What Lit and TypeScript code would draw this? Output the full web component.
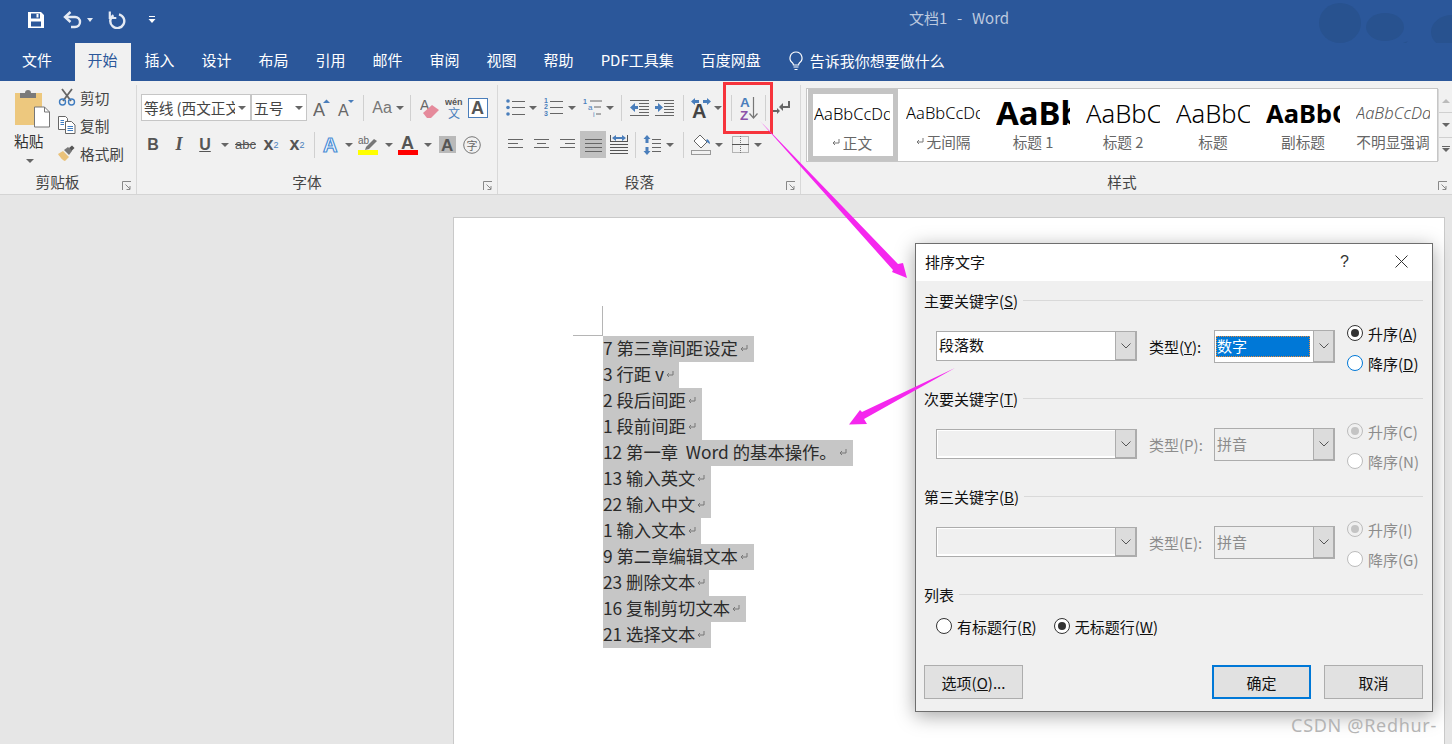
import { LitElement, html, css, svg, type TemplateResult } from "lit";
import { customElement } from "lit/decorators.js";

const GRAY = "#666";
const BLUE = "#4a7ebb";

const ico = (w: number, h: number, body: unknown) =>
  html`<svg width=${w} height=${h} viewBox="0 0 ${w} ${h}">${body}</svg>`;

const lines = (x1: number, x2: number, ys: number[], color = GRAY) =>
  ys.map((y) => svg`<rect x=${x1} y=${y} width=${x2 - x1} height="1" fill=${color} />`);

// -------------------------------------------------------------------------
// Icons
// -------------------------------------------------------------------------

const icons = {
  save: ico(18, 18, svg`<path fill-rule="evenodd" fill="#fff" d="M1 1h13l3 3v13H1zM4 2.500v5h9v-5zM4 10.500v5h10v-5z"/><rect x="9.500" y="3" width="2" height="3.500" fill="#fff"/>`),
  undo: ico(20, 18, svg`<path d="M3 6h9a5 5 0 0 1 0 10H8" fill="none" stroke="#e4eaf4" stroke-width="2.400"/><path d="M7.500 1 2 6l5.500 5" fill="none" stroke="#e4eaf4" stroke-width="2.400"/>`),
  redo: ico(18, 18, svg`<path d="M5.500 4.200A7 7 0 1 0 11 3.300" fill="none" stroke="#e4eaf4" stroke-width="2.400"/><path d="M1.800 .5v6.500h6.500" fill="none" stroke="#e4eaf4" stroke-width="2.200"/>`),
  qat: ico(8, 8, svg`<rect x="1" y="0" width="6" height="1" fill="#fff"/><path d="M0.500 3h7L4 7z" fill="#fff"/>`),
  bulb: ico(16, 20, svg`<path d="M8 1a6 6 0 0 0-3.600 10.800c.8.7 1 1.400 1 2.200h5.200c0-.8.2-1.500 1-2.200A6 6 0 0 0 8 1z" fill="none" stroke="#fff" stroke-width="1.200"/><path d="M5.500 16h5M6.500 18.500h3" stroke="#fff" stroke-width="1.200"/>`),
  paste: ico(36, 40, svg`<rect x="0" y="5" width="27" height="32" fill="#edc87e"/><path d="M5 5h5a3 3 0 0 1 6 0h5v5H5z" fill="#7a7a7a"/><path d="M19.500 19h10l5 5v15h-15z" fill="#fff" stroke="#777"/><path d="M29.500 19v5h5" fill="none" stroke="#777"/>`),
  cut: ico(18, 18, svg`<path d="M4 1l9 12M14 1L5 13" stroke="#666" stroke-width="1.800" fill="none"/><circle cx="4.500" cy="14" r="3" fill="none" stroke="#3f7cc0" stroke-width="1.400"/><circle cx="13.500" cy="14" r="3" fill="none" stroke="#3f7cc0" stroke-width="1.400"/>`),
  copy: ico(18, 18, svg`<path d="M.5.500h7l2 2v11H.5z" fill="#fff" stroke="#666"/><path d="M7.500 5.500h6l3.500 3.500v8.500H7.500z" fill="#fff" stroke="#666"/>${lines(9.5, 15, [10, 12, 14], "#3f7cc0")}${lines(2.5, 6, [4, 6, 8], "#3f7cc0")}`),
  painter: ico(18, 16, svg`<path d="M0 9l5-3 6 6-4 4C5 16 2 12 0 9z" fill="#eac27a"/><path d="M6 5l4-3 4 4-3 4z" fill="#777"/><path d="M11 3l3-2.500 2.500 2.500-3 3z" fill="#555"/>`),
  launcher: ico(9, 10, svg`<path d="M.5 9V.5H9M3.500 3.500 8 8M8 5v3.500H4.500" fill="none" stroke="#888"/>`),
  grow: ico(20, 18, svg`<text x="0" y="17" font-size="18" font-family="Liberation Sans" fill="#666">A</text><path d="M10 4l3.500-3.500L17 4z" fill="${BLUE}"/>`),
  shrink: ico(20, 18, svg`<text x="1" y="17" font-size="16" font-family="Liberation Sans" fill="#666">A</text><path d="M11 1h6l-3 3z" fill="${BLUE}"/>`),
  eraser: ico(20, 20, svg`<text x="0" y="12" font-size="14" font-family="Liberation Sans" fill="#666">A</text><path d="M3 15l9-8 7 5-8 8H7z" fill="#e58a9b"/>`),
  wen: ico(18, 22, svg`<text x="0" y="8" font-size="9" font-weight="700" font-family="Liberation Sans" fill="#555">wén</text><text x="3" y="21" font-size="12" font-family="Noto Sans CJK SC" fill="${BLUE}">文</text>`),
  boxA: ico(20, 20, svg`<rect x=".5" y=".5" width="19" height="19" fill="#fff" stroke="${BLUE}"/><text x="3" y="16" font-size="18" font-weight="700" font-family="Liberation Sans" fill="#555">A</text>`),
  effectA: ico(20, 20, svg`<text x="1" y="17" font-size="20" font-weight="700" font-family="Liberation Sans" fill="#fff" stroke="#4d8fd6" stroke-width="1.200">A</text>`),
  highlight: ico(20, 20, svg`<text x="0" y="9" font-size="10" font-family="Liberation Sans" fill="#666">ab</text><path d="M8 12l8-8 3 2-8 8-4 1z" fill="#777"/><rect x="0" y="15" width="20" height="5" fill="#ff0"/>`),
  colorA: ico(20, 20, svg`<text x="3" y="14" font-size="18" font-weight="700" font-family="Liberation Sans" fill="#555">A</text><rect x="0" y="15" width="20" height="5" fill="#f00"/>`),
  shadeA: ico(17, 17, svg`<rect width="17" height="17" fill="#b9b9b9"/><text x="2" y="15" font-size="17" font-weight="700" font-family="Liberation Sans" fill="#555">A</text>`),
  zi: ico(18, 18, svg`<circle cx="9" cy="9" r="8.300" fill="none" stroke="#777"/><text x="3.500" y="13.500" font-size="11" font-family="Noto Sans CJK SC" fill="#666">字</text>`),
  bullets: ico(19, 17, svg`${lines(6, 19, [2, 8, 15])}<circle cx="2" cy="2" r="1.800" fill="${BLUE}"/><circle cx="2" cy="8.500" r="1.800" fill="${BLUE}"/><circle cx="2" cy="15" r="1.800" fill="${BLUE}"/>`),
  numbers: ico(19, 19, svg`${lines(6, 19, [3, 9, 15])}${[5, 11, 18].map((y, i) => svg`<text x="0" y=${y} font-size="7" font-weight="700" font-family="Liberation Sans" fill="${BLUE}">${i + 1}</text>`)}`),
  multi: ico(20, 19, svg`<path d="M7 3h12M11 9h7M13 16h5" stroke="#666"/><text x="0" y="6" font-size="7" font-weight="700" font-family="Liberation Sans" fill="${BLUE}">1</text><text x="5" y="12" font-size="8" font-family="Liberation Sans" fill="${BLUE}">a</text><text x="10" y="19" font-size="7" font-family="Liberation Sans" fill="${BLUE}">i</text>`),
  outdent: ico(19, 16, svg`${lines(0, 19, [0, 15])}${lines(9, 19, [3, 6, 9, 12])}<path d="M0 7.500 5 3v3h3v3H5v3z" fill="${BLUE}"/>`),
  indent: ico(19, 16, svg`${lines(0, 19, [0, 15])}${lines(9, 19, [3, 6, 9, 12])}<path d="M8 7.500 3 3v3H0v3h3v3z" fill="${BLUE}"/>`),
  pinyinA: ico(20, 20, svg`<path d="M0 3.500 4 0v2h4v3H4v2zM20 3.500 16 0v2h-4v3h4v2z" fill="${BLUE}"/><text x="1" y="20" font-size="20" font-weight="700" font-family="Liberation Sans" fill="#444">A</text>`),
  sort: ico(18, 24, svg`<text x="0" y="11" font-size="13.500" font-weight="700" font-family="Liberation Sans" fill="${BLUE}">A</text><text x="0" y="24" font-size="13.500" font-weight="700" font-family="Liberation Sans" fill="#8b52a8">Z</text><path d="M13.500 1v21M9.500 17.500l4 4.500 4-4.500" fill="none" stroke="#777" stroke-width="1.200"/>`),
  enter: ico(18, 16, svg`<path d="M16 1v6H8" fill="none" stroke="#666" stroke-width="2"/><path d="M10 3 6 7l4 4z" fill="#666"/><path d="M0 11h5" stroke="#666" stroke-width="2"/><path d="M4 8l3 3-3 3z" fill="#666"/>`),
  left: ico(15, 13, lines(0, 15, [1, 9]).concat(lines(0, 10, [5, 13]))),
  center: ico(15, 13, lines(0, 15, [1, 9]).concat(lines(3, 12, [5, 13]))),
  right: ico(15, 13, lines(0, 15, [1, 9]).concat(lines(5, 15, [5, 13]))),
  justify: ico(17, 14, lines(0, 17, [1, 5, 9, 13])),
  distribute: ico(18, 19, svg`${lines(0, 18, [6, 9, 12, 15, 18], "#555")}<rect x="0" y="0" width="1" height="6" fill="#555"/><rect x="17" y="0" width="1" height="6" fill="#555"/><path d="M2 3l4-3v2h6V0l4 3-4 3V4H6v2z" fill="${BLUE}"/>`),
  spacing: ico(18, 20, svg`<path d="M3 0l3.500 4H4.500v4h-3V4H-.5zM3 20l3.500-4H4.500v-4h-3v4H-.5z" fill="${BLUE}" transform="translate(1 0)"/>${lines(9, 18, [4, 8, 12, 16])}`),
  shading: ico(20, 21, svg`<path d="M9 1l7 7-6 6-7-7z" fill="#fff" stroke="#666"/><path d="M16 5c2 1 3 3 3 5-2-1-3-2-4-3z" fill="${BLUE}"/><rect x=".5" y="16.500" width="19" height="4" fill="#f1f1f1" stroke="#999"/>`),
  borders: ico(17, 17, svg`<rect x=".5" y=".5" width="16" height="16" fill="none" stroke="#777" stroke-dasharray="1 1"/><path d="M8.500 0v17" stroke="#777" stroke-dasharray="1 1"/><path d="M0 8.500h17" stroke="#555"/>`),
  ret: ico(8, 8, svg`<path d="M7 1v4H2" fill="none" stroke="#777"/><path d="M3 3 1 5l2 2" fill="none" stroke="#777"/>`),
  chevron: ico(10, 6, svg`<path d="M.5.500 5 5 9.500.500" fill="none" stroke="#555"/>`),
};

const docLines: [string, number][] = [
  ["7 第三章间距设定", 151],
  ["3 行距 v", 76],
  ["2 段后间距", 99],
  ["1 段前间距", 99],
  ["12 第一章  Word 的基本操作。", 250],
  ["13 输入英文", 108],
  ["22 输入中文", 108],
  ["1 输入文本", 98],
  ["9 第二章编辑文本", 151],
  ["23 删除文本", 106],
  ["16 复制剪切文本", 143],
  ["21 选择文本", 108],
];

const tabs = ["文件", "开始", "插入", "设计", "布局", "引用", "邮件", "审阅", "视图", "帮助", "PDF工具集", "百度网盘"];

const galleryItems = [
  { sample: "AaBbCcDd", name: "正文", cls: "s-normal", ret: true },
  { sample: "AaBbCcDd", name: "无间隔", cls: "s-normal", ret: true },
  { sample: "AaBb", name: "标题 1", cls: "s-h1", ret: false },
  { sample: "AaBbCc", name: "标题 2", cls: "s-h2", ret: false },
  { sample: "AaBbCc", name: "标题", cls: "s-h2", ret: false },
  { sample: "AaBbCc", name: "副标题", cls: "s-sub", ret: false },
  { sample: "AaBbCcDd", name: "不明显强调", cls: "s-em", ret: false },
];

@customElement("app-root")
export class AppRoot extends LitElement {
  private _btn(icon: TemplateResult, w: number) {
    return html`<span class="btn" style="width:${w}px">${icon}</span>`;
  }

  private _caret(w: number) {
    return html`<span class="btn" style="width:${w}px"><i class="caret"></i></span>`;
  }

  private _radio(label: TemplateResult, kind: string) {
    return html`<label class="radio ${kind}"><i></i><span>${label}</span></label>`;
  }

  private _section(title: TemplateResult, label: TemplateResult, disabled: boolean, first: string, type: string, r1: TemplateResult, r2: TemplateResult) {
    return html`
      <section class="sec ${disabled ? "off" : ""}">
        <div class="sec-head"><span>${title}</span><hr /></div>
        <div class="sec-row">
          <div class="select key">
            <span class="val">${first}</span>
            <span class="drop">${icons.chevron}</span>
          </div>
          <span class="type-label">${label}</span>
          <div class="select type">
            ${disabled ? html`<span class="val">${type}</span>` : html`<span class="val chosen">${type}</span>`}
            <span class="drop">${icons.chevron}</span>
          </div>
          <div class="radios">
            ${this._radio(r1, disabled ? "dis on" : "on")}
            ${this._radio(r2, disabled ? "dis" : "focus")}
          </div>
        </div>
      </section>
    `;
  }

  private _dialog() {
    return html`
      <div class="dialog">
        <div class="dlg-title">
          <span>排序文字</span>
          <b class="help">?</b>
          <svg class="close" width="13" height="13" viewBox="0 0 13 13"><path d="M.5.500l12 12M12.500.500l-12 12" stroke="#333" /></svg>
        </div>
        <div class="dlg-body">
          ${this._section(html`主要关键字(<u>S</u>)`, html`类型(<u>Y</u>):`, false, "段落数", "数字", html`升序(<u>A</u>)`, html`降序(<u>D</u>)`)}
          ${this._section(html`次要关键字(<u>T</u>)`, html`类型(P):`, true, "", "拼音", html`升序(C)`, html`降序(N)`)}
          ${this._section(html`第三关键字(<u>B</u>)`, html`类型(E):`, true, "", "拼音", html`升序(I)`, html`降序(G)`)}
          <section class="list">
            <div class="sec-head"><span>列表</span><hr /></div>
            <div class="list-row">
              ${this._radio(html`有标题行(<u>R</u>)`, "")}
              ${this._radio(html`无标题行(<u>W</u>)`, "on")}
            </div>
          </section>
          <div class="dlg-btns">
            <button>选项(<u>O</u>)...</button>
            <span class="grow"></span>
            <button class="primary">确定</button>
            <button>取消</button>
          </div>
        </div>
      </div>
    `;
  }

  protected render() {
    return html`
      <div class="title-bar">
        <svg class="clouds" width="200" height="65" viewBox="0 0 200 65">
          <g fill="#28528f">
            <ellipse cx="88" cy="23" rx="21" ry="20" />
            <ellipse cx="133" cy="27" rx="19" ry="14" />
            <path d="M68 47c25 6 60 6 88-6-10 14-60 14-88 12z" />
            <ellipse cx="200" cy="32" rx="21" ry="17" />
            <path d="M172 50c8 6 18 8 28 8v4c-12 0-24-4-28-12z" />
          </g>
        </svg>
        <div class="qat">
          ${icons.save}
          <span class="undo">${icons.undo}<i class="caret white"></i></span>
          ${icons.redo}
          <span class="qat-more">${icons.qat}</span>
        </div>
        <div class="doc-title">文档1 &nbsp;-&nbsp; Word</div>
      </div>

      <nav class="tabs">
        ${tabs.map((t, i) => html`<span class="tab ${i === 1 ? "active" : ""} ${i === 0 ? "file" : ""}">${t}</span>`)}
        <span class="tell">${icons.bulb}告诉我你想要做什么</span>
      </nav>

      <div class="ribbon">
        <div class="group g-clip">
          <div class="clip">
            <div class="paste">${icons.paste}<span>粘贴</span><i class="caret"></i></div>
            <div class="clip-list">
              <span>${icons.cut}剪切</span>
              <span>${icons.copy}复制</span>
              <span>${icons.painter}格式刷</span>
            </div>
          </div>
          <div class="g-label">剪贴板<span class="launch">${icons.launcher}</span></div>
        </div>

        <div class="group g-font">
          <div class="rows">
            <div class="row">
              <div class="combo c-font"><span>等线 (西文正文)</span><i class="caret"></i></div>
              <div class="combo c-size"><span>五号</span><i class="caret"></i></div>
              <span class="gap4"></span>
              ${this._btn(icons.grow, 24)}${this._btn(icons.shrink, 24)}
              <i class="sep"></i>
              <span class="btn aa">Aa<i class="caret"></i></span>
              <i class="sep"></i>
              <span class="gap2"></span>
              ${this._btn(icons.eraser, 24)}${this._btn(icons.wen, 23)}${this._btn(icons.boxA, 26)}
            </div>
            <div class="row">
              <span class="btn fmt b">B</span>
              <span class="btn fmt i w28">I</span>
              <span class="btn fmt u">U</span>
              ${this._caret(16)}
              <span class="btn fmt abc">abc</span>
              <span class="btn fmt sub">x<sub>2</sub></span>
              <span class="btn fmt sub">x<sup>2</sup></span>
              <i class="sep"></i>
              ${this._btn(icons.effectA, 24)}${this._caret(10)}
              ${this._btn(icons.highlight, 28)}${this._caret(14)}
              ${this._btn(icons.colorA, 24)}${this._caret(16)}
              ${this._btn(icons.shadeA, 22)}${this._btn(icons.zi, 28)}
            </div>
          </div>
          <div class="g-label">字体<span class="launch">${icons.launcher}</span></div>
        </div>

        <div class="group g-para">
          <div class="rows">
            <div class="row">
              ${this._btn(icons.bullets, 24)}${this._caret(12)}
              <span class="gap2"></span>
              ${this._btn(icons.numbers, 24)}${this._caret(14)}
              <span class="gap4"></span>
              ${this._btn(icons.multi, 20)}${this._caret(14)}
              <i class="sep"></i>
              ${this._btn(icons.outdent, 24)}${this._btn(icons.indent, 26)}
              <span class="gap2"></span>
              <i class="sep"></i>
              ${this._btn(icons.pinyinA, 24)}${this._caret(10)}
              <span class="gap4"></span>
              <i class="sep"></i>
              ${this._btn(icons.sort, 24)}
              <i class="sep"></i>
              ${this._btn(icons.enter, 22)}
            </div>
            <div class="row">
              ${this._btn(icons.left, 24)}<span class="gap2"></span>
              ${this._btn(icons.center, 24)}<span class="gap2"></span>
              ${this._btn(icons.right, 25)}
              <span class="btn justify">${icons.justify}</span>
              ${this._btn(icons.distribute, 25)}
              <i class="sep"></i>
              ${this._btn(icons.spacing, 22)}${this._caret(14)}
              <span class="gap2"></span>
              <i class="sep"></i>
              ${this._btn(icons.shading, 24)}${this._caret(12)}
              <span class="gap4"></span>
              ${this._btn(icons.borders, 22)}${this._caret(14)}
            </div>
          </div>
          <div class="g-label">段落<span class="launch">${icons.launcher}</span></div>
        </div>

        <div class="group g-style">
          <div class="gallery-wrap">
            <div class="gallery">
              ${galleryItems.map(
                (it, i) => html`
                  <div class="style ${i === 0 ? "sel" : ""}">
                    <div class="sample ${it.cls}">${it.sample}</div>
                    <div class="style-name">${it.ret ? icons.ret : ""}${it.name}</div>
                  </div>
                `
              )}
            </div>
            <div class="scroller">
              <span><i class="caret up"></i></span>
              <span><i class="caret"></i></span>
              <span><i class="bar"></i><i class="caret"></i></span>
            </div>
          </div>
          <div class="g-label style-label">样式<span class="launch">${icons.launcher}</span></div>
        </div>
      </div>

      <main class="canvas">
        <div class="page">
          <i class="crop"></i>
          ${docLines.map(
            ([text, w]) => html`<div class="doc-line"><span style="width:${w}px">${text}${icons.ret}</span></div>`
          )}
        </div>
      </main>

      ${this._dialog()}

      <i class="redbox"></i>
      <svg class="arrows" width="1452" height="744" viewBox="0 0 1452 744">
        <polygon fill="#f527ee" points="759,120 898,264 903,263 907,278 892,272 893,270" />
        <polygon fill="#f527ee" points="955,368 862,412 860,410 849,424.500 867,424 864,419" />
      </svg>
      <div class="watermark">CSDN @Redhur-</div>
    `;
  }

  static styles = css`
    :host {
      display: block;
      position: relative;
      width: 1452px;
      height: 744px;
      overflow: hidden;
      background: #e6e6e6;
      font-family: "Noto Sans CJK SC", "Noto Sans", sans-serif;
      font-size: 14.67px;
      color: #444;
    }
    * { box-sizing: border-box; }
    svg { display: block; flex: none; }
    i { font-style: normal; }

    .caret {
      display: inline-block;
      width: 0;
      height: 0;
      border-left: 4px solid transparent;
      border-right: 4px solid transparent;
      border-top: 4px solid #666;
    }
    .caret.white { border-top-color: #e4eaf4; border-left-width: 3px; border-right-width: 3px; }
    .caret.up { border-top: 0; border-bottom: 4px solid #bbb; }

    /* title bar */
    .title-bar {
      position: relative;
      height: 43px;
      background: #2b579a;
    }
    .clouds { position: absolute; right: 0; top: 0; }
    .qat {
      display: flex;
      align-items: center;
      height: 40px;
      padding-left: 27px;
    }
    .undo { display: flex; align-items: center; gap: 4px; margin: 0 15px 0 18px; }
    .qat-more { margin-left: 22px; }
    .doc-title {
      position: absolute;
      left: 0;
      right: 0;
      top: 7px;
      padding-left: 466px;
      text-align: center;
      color: #bcc9df;
      font-size: 15px;
      word-spacing: 1.5px;
      line-height: 22px;
    }

    /* tabs */
    .tabs {
      position: relative;
      display: flex;
      height: 38px;
      background: #2b579a;
      color: #fff;
      align-items: stretch;
      font-size: 15px;
    }
    .tab {
      padding: 0 13.500px;
      line-height: 34px;
      white-space: nowrap;
    }
    .tab.file { padding: 0 22px; width: 75px; }
    .tab.active { background: #f1f1f1; color: #2b579a; padding: 0 12.500px; width: 56px; }
    .tell {
      display: flex;
      align-items: center;
      gap: 6px;
      margin-left: 13.500px;
      height: 35px;
      white-space: nowrap;
    }

    /* ribbon */
    .ribbon {
      display: flex;
      height: 114px;
      background: #f1f1f1;
      border-bottom: 1px solid #d4d4d4;
    }
    .group {
      position: relative;
      display: flex;
      flex-direction: column;
      height: 109px;
      border-right: 1px solid #d8d8d8;
      margin-top: 4px;
    }
    .g-clip { width: 137px; }
    .g-font { width: 361px; padding-left: 4px; }
    .g-para { width: 303px; padding-left: 5px; }
    .g-style { flex: 1; border-right: 0; padding-left: 5px; }
    .g-label {
      margin-top: auto;
      height: 24px;
      line-height: 24px;
      text-align: center;
      padding-right: 24px;
    }
    .style-label { padding-right: 14px; }
    .launch { position: absolute; right: 5px; bottom: 3px; }
    .g-clip .g-label { padding-right: 21px; }

    .clip { display: flex; padding: 3px 0 0 15px; }
    .paste {
      display: flex;
      flex-direction: column;
      align-items: flex-start;
      width: 43px;
      color: #333;
      line-height: 20px;
    }
    .paste span { margin: 3px 0 0 -1px; }
    .paste .caret { margin: 8px 0 0 11px; }
    .clip-list { display: flex; flex-direction: column; margin-top: -5px; }
    .clip-list span {
      display: flex;
      align-items: center;
      gap: 4px;
      height: 28px;
      white-space: nowrap;
    }

    .rows { display: flex; flex-direction: column; gap: 10px; padding-top: 9px; }
    .row { display: flex; align-items: center; height: 27px; }
    .btn {
      display: flex;
      align-items: center;
      justify-content: center;
      height: 27px;
      flex: none;
    }
    .sep {
      flex: none;
      width: 1px;
      height: 26px;
      margin: 0 5px 0 4px;
      background: #d0d0d0;
    }
    .gap2 { width: 2px; flex: none; }
    .gap4 { width: 4px; flex: none; }
    .combo {
      display: flex;
      align-items: center;
      height: 27px;
      background: #fff;
      border: 1px solid #c6c6c6;
      padding: 0 3px 0 2px;
      font-size: 14.67px;
      color: #444;
      white-space: nowrap;
    }
    .combo span { flex: 1; overflow: hidden; }
    .c-font { width: 110px; padding-right: 4px; }
    .c-font .caret { margin-left: 3px; }
    .c-size { width: 56px; }
    .aa { width: 36px; gap: 4px; font-family: "Liberation Sans", sans-serif; font-size: 16px; color: #777; margin-left: 1px; }
    .fmt {
      width: 24px;
      font-family: "Liberation Sans", sans-serif;
      font-size: 16px;
      font-weight: 700;
      color: #555;
    }
    .fmt.w28 { width: 28px; font-style: italic; font-family: "Liberation Serif", serif; font-size: 18px; }
    .fmt.u { text-decoration: underline; }
    .fmt.abc { width: 25px; font-size: 13px; font-weight: 400; text-decoration: line-through; }
    .fmt.sub { width: 26px; font-size: 18px; }
    .fmt sub, .fmt sup { font-size: 9px; font-weight: 400; color: #4a7ebb; }
    .justify { width: 26px; background: #c1c1c1; }

    /* gallery */
    .gallery-wrap {
      display: flex;
      height: 74px;
      margin-top: 3px;
      border: 1px solid #c6c6c6;
      background: #fff;
      width: 632px;
    }
    .gallery { display: flex; flex: 1; padding-left: 1px; }
    .style {
      width: 90px;
      flex: none;
      padding: 5px 8px 0;
      overflow: hidden;
      text-align: center;
    }
    .style.sel { border: 5px solid #c4c4c4; padding: 0 3px 0 1px; }
    .sample {
      overflow: hidden;
      white-space: nowrap;
      color: #000;
      font-family: "Noto Sans", sans-serif;
      font-weight: 300;
      text-align: left;
    }
    .style.sel .sample { height: 40px; line-height: 40px; }
    .style:not(.sel) .sample { height: 42px; line-height: 42px; margin-top: -2px; }
    .s-normal { font-size: 16.500px; }
    .sample.s-h1 { font-size: 33px; font-weight: 700; }
    .s-h2 { font-size: 25.500px; }
    .sample.s-sub { font-size: 25.500px; font-weight: 700; }
    .s-em { font-size: 16.500px; font-style: italic; color: #555; }
    .style-name {
      display: flex;
      align-items: center;
      justify-content: center;
      gap: 3px;
      height: 22px;
      margin-top: -4px;
      font-size: 14.67px;
      color: #666;
      white-space: nowrap;
    }
    .style.sel .style-name { margin-top: -3px; }
    .scroller {
      display: flex;
      flex-direction: column;
      width: 14px;
      flex: none;
      background: #f1f1f1;
      border-left: 1px solid #d8d8d8;
    }
    .scroller span {
      flex: 1;
      display: flex;
      flex-direction: column;
      gap: 1px;
      align-items: center;
      justify-content: center;
      border-bottom: 1px solid #d0d0d0;
    }
    .scroller span:last-child { border-bottom: 0; }
    .scroller .bar { width: 8px; height: 1px; background: #666; }

    /* document */
    .canvas { padding: 22px 0 0 453px; }
    .page {
      position: relative;
      width: 992px;
      height: 560px;
      background: #fff;
      border: 1px solid #c9c9c9;
      padding: 118px 0 0 149px;
      color: #2b2b2b;
    }
    .crop {
      position: absolute;
      left: 119px;
      top: 88px;
      width: 30px;
      height: 30px;
      border-right: 1px solid #b5b5b5;
      border-bottom: 1px solid #b5b5b5;
    }
    .doc-line {
      height: 26px;
      font-size: 17.330px;
      white-space: pre;
    }
    .doc-line span {
      display: flex;
      align-items: center;
      gap: 2px;
      height: 26px;
      padding-bottom: 3px;
      background: #c6c6c6;
    }

    /* dialog */
    .dialog {
      position: absolute;
      left: 915px;
      top: 243px;
      width: 518px;
      height: 469px;
      background: #f0f0f0;
      border: 1px solid #6e6e6e;
      box-shadow: 0 4px 18px rgba(0, 0, 0, 0.35);
      color: #111;
      font-size: 15px;
    }
    .dlg-title {
      display: flex;
      align-items: center;
      height: 37px;
      padding: 0 0 2px 9px;
      background: #fff;
    }
    .help { margin-left: auto; font-weight: 400; font-family: "Liberation Sans", sans-serif; font-size: 16px; color: #333; }
    .close { margin: 0 24px 0 46px; }
    .dlg-body { padding: 9px 9px 0 8px; }
    .sec { height: 98px; }
    .sec-head {
      display: flex;
      align-items: center;
      gap: 5px;
      height: 20px;
      white-space: nowrap;
    }
    .sec-head hr {
      flex: 1;
      height: 1px;
      margin: 0;
      border: 0;
      background: #d9d9d9;
    }
    .sec-row {
      display: flex;
      align-items: center;
      height: 60px;
      margin-top: 6px;
      padding-left: 12px;
    }
    .select {
      position: relative;
      display: flex;
      flex: none;
      background: #fff;
      border: 1px solid #acacac;
    }
    .select.key { width: 201px; height: 30px; }
    .select.type { width: 121px; height: 33px; }
    .select .val { flex: 1; padding-left: 2px; line-height: 26px; overflow: hidden; }
    .select.type .val { margin: 5px 3px 5px 1px; padding-left: 1px; line-height: 19px; }
    .val.chosen { background: #0078d7; color: #fff; outline: 1px dotted #e78a3a; outline-offset: -1px; }
    .drop {
      display: flex;
      align-items: center;
      justify-content: center;
      width: 21px;
      background: #dcdcdc;
      border-left: 1px solid #acacac;
      border-right: 1px solid #acacac;
      border-bottom: 1px solid #acacac;
    }
    .type-label { width: 65px; margin-left: 12px; flex: none; white-space: nowrap; }
    .radios { display: flex; flex-direction: column; gap: 14px; margin: 4px 0 0 12px; }
    .radio { display: flex; align-items: center; gap: 5px; height: 16px; white-space: nowrap; }
    .radio i {
      position: relative;
      width: 16px;
      height: 16px;
      flex: none;
      border: 1px solid #333;
      border-radius: 50%;
      background: #fff;
    }
    .radio.on i::after {
      content: "";
      position: absolute;
      inset: 3px;
      border-radius: 50%;
      background: #333;
    }
    .radio.focus i { border-color: #0078d7; }
    .radio.dis i { border-color: #bcbcbc; }
    .radio.dis.on i { background: #f0f0f0; }
    .radio.dis.on i::after { background: #c4c4c4; }

    .off .type-label, .off .radio { color: #8c8c8c; }
    .off .select.key { background: #f0f0f0; box-shadow: inset 1px 1px 0 #fff, inset 0 -2px 0 #fff; }
    .off .select.type { background: #efefef; color: #8c8c8c; }

    .list { height: 81px; }
    .list-row { display: flex; gap: 17px; padding: 14px 0 0 12px; }
    .dlg-btns { display: flex; gap: 13px; }
    .grow { flex: 1; }
    .dlg-btns button {
      width: 99px;
      height: 34px;
      background: #e1e1e1;
      border: 1px solid #adadad;
      font: inherit;
      color: #111;
      padding: 0;
    }
    .dlg-btns button.primary { border: 2px solid #0078d7; }

    /* annotations on top of the screenshot */
    .redbox {
      position: absolute;
      left: 723px;
      top: 82px;
      width: 50px;
      height: 52px;
      border: 3px solid #f6343c;
    }
    .arrows { position: absolute; left: 0; top: 0; pointer-events: none; }
    .watermark {
      position: absolute;
      right: 15px;
      top: 712px;
      font-family: "Noto Sans", sans-serif;
      font-size: 18px;
      line-height: 26px;
      letter-spacing: 0.7px;
      color: #b4b4b4;
      white-space: nowrap;
    }
  `;
}
